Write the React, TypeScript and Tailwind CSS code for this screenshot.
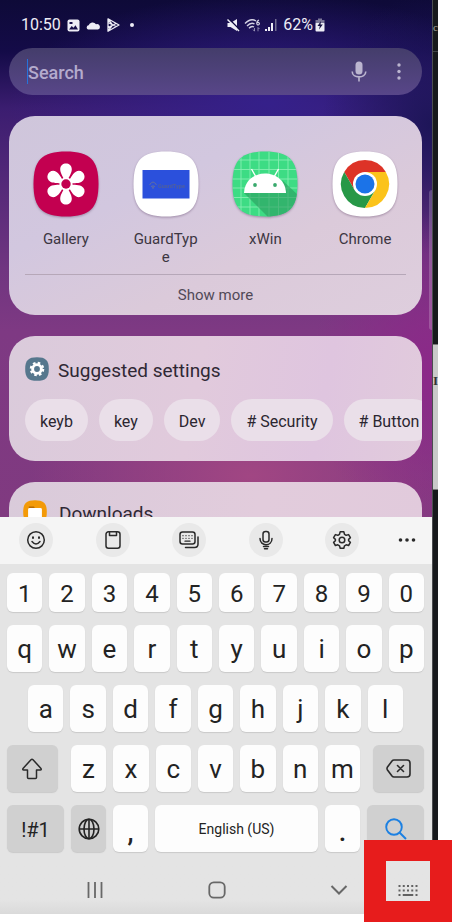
import type { ReactNode } from "react";

const WALLPAPER =
  "bg-[radial-gradient(ellipse_120px_160px_at_100%_72%,#8c2889_0%,#8c288900_100%),radial-gradient(ellipse_220px_110px_at_58%_92%,#a14683_0%,#a1468300_100%),radial-gradient(ellipse_110px_130px_at_100%_24%,#1d1558_0%,#1d155800_100%),radial-gradient(ellipse_260px_110px_at_62%_20%,#35208a_0%,#35208a00_100%),linear-gradient(180deg,#0e0a38_0%,#140b48_10%,#3b1d70_21%,#4e2677_32%,#703580_52%,#7e3983_64%,#803a80_100%)]";

function StatusBar() {
  return (
    <header className="flex h-6 items-center justify-between pl-3 text-[16px] leading-6 text-[#eeedf6]">
      <div className="flex items-center gap-[6px]">
        <span>10:50</span>
        <svg width="13" height="13" viewBox="0 0 13 13" aria-hidden="true">
          <rect x="0.5" y="0.5" width="12" height="12" rx="2" fill="#eeedf6" />
          <path d="M2 10.500 L4.700 7 L6.500 8.800 L8.500 6.200 L11 10.500 Z" fill="#160d4a" />
          <rect x="2.500" y="3" width="3" height="2" fill="#160d4a" />
        </svg>
        <svg width="14" height="9" viewBox="0 0 14 9" aria-hidden="true">
          <path d="M2 8.500 A2.200 2.200 0 0 1 2.600 4.300 A4.200 4.200 0 0 1 10 3.200 A2.800 2.800 0 0 1 12 8.500 Z" fill="#eeedf6" />
        </svg>
        <svg width="14" height="14" viewBox="0 0 14 14" fill="none" stroke="#eeedf6" strokeWidth="1.300" strokeLinejoin="round" aria-hidden="true">
          <path d="M2 0.800 L13 7 L2 13.200 Z M2 1 L6.500 7 L2 13 M2 9.500 L10 5.500 M2 4.500 L10 8.500" />
        </svg>
        <span className="ml-1 size-1 rounded-full bg-[#eeedf6]" />
      </div>
      <div className="mr-[97px] flex items-center gap-1">
        <svg width="13" height="14" viewBox="0 0 13 14" aria-hidden="true">
          <path d="M0.500 5 H3.500 L10 1 V13 L3.500 9 H0.500 Z" fill="#eeedf6" />
          <path d="M1.500 0.500 L13 12" stroke="#100b40" strokeWidth="1.500" />
          <path d="M0.500 1.500 L12 13" stroke="#eeedf6" strokeWidth="1.500" />
        </svg>
        <svg width="17" height="13" viewBox="0 0 17 13" fill="none" stroke="#d4d2e4" strokeWidth="1.400" aria-hidden="true">
          <path d="M1 4.500 Q7 -1.500 12 2 M3 7 Q7 2.800 10.500 5 M5 9.300 Q7.500 6.500 10 8" />
          <path d="M15 1 Q12.500 2 12.800 4.800 A1.300 1.300 0 1 0 13.500 3.500" strokeWidth="1.200" />
          <path d="M10.500 9 V12 M9 10.500 L10.500 12.300 M14 12.300 V8.500 L15.500 10" strokeWidth="1" opacity="0.600" />
        </svg>
        <svg width="12" height="12" viewBox="0 0 12 12" aria-hidden="true">
          <path d="M0 10h2v2H0zM3 8h2v4H3zM6 4h2v8H6z" fill="#eeedf6" />
          <path d="M10 0h1.500v12H10z" fill="#716d91" />
        </svg>
        <span className="ml-[2px] flex items-center gap-[2px]">
          62%
          <svg width="10" height="14" viewBox="0 0 10 14" aria-hidden="true">
            <path d="M3 0.500 H7 V2 H9.500 V6 H0.500 V2 H3 Z" fill="#7c7898" />
            <rect x="0.500" y="5" width="9" height="8.500" rx="1" fill="#eeedf6" />
            <path d="M6 3 L2.500 8 H4.800 L4 11.500 L7.800 6.500 H5.500 Z" fill="#151040" />
          </svg>
        </span>
      </div>
    </header>
  );
}

function SearchBar() {
  return (
    <form className="mt-[11px] flex h-[47px] items-center rounded-full bg-linear-to-b from-[#443d6b] to-[#584689] pl-[18px]">
      <span className="h-[25px] w-px bg-[#2673dc]" />
      <input
        type="text"
        aria-label="Search"
        placeholder="Search"
        className="min-w-0 flex-1 bg-transparent pt-px text-[18px] font-medium text-white outline-none placeholder:text-[#b4abcd]"
      />
      <button type="button" aria-label="Voice search" className="flex w-10 justify-center">
        <svg width="16" height="21" viewBox="0 0 16 21" fill="none">
          <rect x="4.500" y="0.500" width="7" height="13" rx="3.500" fill="#bbb5cf" />
          <path d="M1.200 10.500 C1.200 17.700 14.800 17.700 14.800 10.500 M8 16 V20.500" stroke="#bbb5cf" strokeWidth="1.600" />
        </svg>
      </button>
      <button type="button" aria-label="More options" className="mr-[3px] flex w-10 justify-center">
        <svg width="4" height="17" viewBox="0 0 4 17" fill="#bbb5cf">
          <circle cx="2" cy="2" r="1.700" />
          <circle cx="2" cy="8.500" r="1.700" />
          <circle cx="2" cy="15" r="1.700" />
        </svg>
      </button>
    </form>
  );
}

const SQUIRCLE = "M33 0.500 C57 0.500 65.500 9 65.500 33 C65.500 57 57 65.500 33 65.500 C9 65.500 0.500 57 0.500 33 C0.500 9 9 0.500 33 0.500 Z";

function AppIcon({ name, fill, children }: { name: string; fill: string; children: ReactNode }) {
  const clip = `clip-${name}`;
  return (
    <svg width="66" height="66" viewBox="0 0 66 66" className="drop-shadow-[0_1px_1px_rgba(60,30,70,0.35)]" aria-hidden="true">
      <clipPath id={clip}>
        <path d={SQUIRCLE} />
      </clipPath>
      <g clipPath={`url(#${clip})`}>
        <rect width="66" height="66" fill={fill} />
        {children}
      </g>
    </svg>
  );
}

const apps: { name: string; fill: string; art: ReactNode }[] = [
  {
    name: "Gallery",
    fill: "#c30050",
    art: (
      <g fill="#fff">
        {[0, 60, 120, 180, 240, 300].map((a) => (
          <path key={a} transform={`rotate(${a} 33 33)`} d="M33 33 C31 26.500 27.200 23 27.200 18.300 C27.200 10.600 38.800 10.600 38.800 18.300 C38.800 23 35 26.500 33 33 Z" />
        ))}
        <circle cx="33" cy="33" r="6.600" />
        <circle cx="33" cy="33" r="4.700" fill="#c30050" />
      </g>
    ),
  },
  {
    name: "GuardType",
    fill: "#fff",
    art: (
      <g>
        <rect x="9.500" y="19" width="47" height="28.500" fill="#2b50dc" />
        <path d="M16.500 34 q3.500 -6 7 0 M18 35 q2 3 4 0 M20 34 v4" stroke="#5f6da3" fill="none" />
        <text x="25" y="37" fontSize="5.500" fontWeight="700" fill="#4f5f9d" fontFamily="Roboto, sans-serif">
          GuardType
        </text>
      </g>
    ),
  },
  {
    name: "xWin",
    fill: "#3ddc84",
    art: (
      <g>
        <path d="M9 0V66M18 0V66M27 0V66M37 0V66M46.500 0V66M56 0V66M0 9H66M0 18.500H66M0 28H66M0 37H66M0 46.500H66M0 56H66" stroke="#86edb2" strokeWidth="0.900" />
        <path d="M12 42 L36 66 H66 V44 L50 29 L54 42 Z" fill="#2b9c60" opacity="0.620" />
        <path d="M12 42 C13 16 53 16 54 42 Z" fill="#fff" />
        <path d="M19.500 18 L24 26 M46.500 18 L42 26" stroke="#fff" strokeWidth="1.400" />
        <circle cx="23" cy="34" r="1.900" fill="#3aa96d" />
        <circle cx="43" cy="34" r="1.900" fill="#3aa96d" />
      </g>
    ),
  },
  {
    name: "Chrome",
    fill: "#fff",
    art: (
      <g>
        <path d="M33 33 L53.800 21 A24 24 0 0 0 12.200 21 L22.600 39 Z" fill="#dd3327" />
        <path d="M33 33 L22.600 39 L12.200 21 A24 24 0 0 0 33 57 L43.400 39 Z" fill="#279847" />
        <path d="M33 21 H53.800 A24 24 0 0 1 33 57 L43.400 39 Z" fill="#fbc31b" />
        <circle cx="33" cy="33" r="12" fill="#fff" />
        <circle cx="33" cy="33" r="9.500" fill="#1b73e8" />
      </g>
    ),
  },
];

function AppsCard() {
  return (
    <section className="mt-[21px] rounded-[26px] bg-[linear-gradient(155deg,#cfc6db_0%,#d2c7df_35%,#dbcada_65%,#decedd_100%)] pt-[35px]">
      <div className="grid h-[123px] grid-cols-4 px-[7px]">
        {apps.map((app) => (
          <button key={app.name} type="button" className="flex flex-col items-center gap-[13px]">
            <AppIcon name={app.name} fill={app.fill}>
              {app.art}
            </AppIcon>
            <span className="w-16 text-[15px] leading-[18px] break-all text-[#3c3642]">{app.name}</span>
          </button>
        ))}
      </div>
      <div className="mx-4 border-t border-[#b6a7b8]">
        <button type="button" className="block h-10 w-full text-[15px] text-[#514957]">
          Show more
        </button>
      </div>
    </section>
  );
}

const suggestions = ["keyb", "key", "Dev", "# Security", "# Button"];

function SettingsCard() {
  return (
    <section className="mt-[21px] overflow-hidden rounded-[26px] bg-[linear-gradient(100deg,#dacbdb_0%,#e1cadc_45%,#dfc5df_75%,#e1cbdc_100%)] pt-[21px] pb-5">
      <h2 className="flex h-6 items-center gap-[9px] pl-4 text-[19px] text-[#2f2834]">
        <svg width="24" height="24" viewBox="0 0 66 66" aria-hidden="true">
          <path d={SQUIRCLE} fill="#56778d" />
          <circle cx="33" cy="33" r="12" fill="none" stroke="#fff" strokeWidth="8" />
          <circle cx="33" cy="33" r="17" fill="none" stroke="#fff" strokeWidth="6" strokeDasharray="7 6.350" />
        </svg>
        <span className="pt-1">Suggested settings</span>
      </h2>
      <div className="mt-[18px] flex gap-[11px] pl-4">
        {suggestions.map((label) => (
          <button key={label} type="button" className="h-[42px] shrink-0 rounded-full bg-[#eadfe9] px-[15px] pt-[3px] text-[16px] whitespace-nowrap text-[#2b2630]">
            {label}
          </button>
        ))}
      </div>
    </section>
  );
}

function DownloadsCard() {
  return (
    <section className="mt-[21px] rounded-t-[26px] bg-[linear-gradient(100deg,#d9cbda_0%,#e2ccdc_60%,#e1cadc_100%)] pt-[18px] pb-10">
      <h2 className="flex h-6 items-center gap-3 pl-[14px] text-[19px] text-[#2f2834]">
        <svg width="24" height="24" viewBox="0 0 66 66" aria-hidden="true">
          <path d={SQUIRCLE} fill="#f39a08" />
          <path d="M16 18 H30 L34 24 H16 Z" fill="#b86a00" />
          <rect x="14" y="22" width="38" height="30" rx="4" fill="#fff" />
        </svg>
        <span className="pt-1">Downloads</span>
      </h2>
    </section>
  );
}

function ToolButton({ label, children }: { label: string; children: ReactNode }) {
  return (
    <button type="button" aria-label={label} className="flex size-[34px] items-center justify-center rounded-full bg-[#e9e9e9]">
      <svg width="20" height="20" viewBox="0 0 20 20" fill="none" stroke="#2a2a2a" strokeWidth="1.500" strokeLinecap="round" strokeLinejoin="round">
        {children}
      </svg>
    </button>
  );
}

function Toolbar() {
  return (
    <div className="flex h-[47px] items-center justify-between bg-[#f5f5f5] pr-5 pb-px pl-[19px]">
      <ToolButton label="Emoji">
        <circle cx="10" cy="10" r="8.300" />
        <path d="M6 11.500 Q10 16.500 14 11.500" />
        <path d="M7 7.200 V8 M13 7.200 V8" strokeWidth="2" />
      </ToolButton>
      <ToolButton label="Clipboard">
        <rect x="3" y="1.800" width="14" height="16.400" rx="2.500" />
        <path d="M6.500 2 V5.500 H13.500 V2" />
      </ToolButton>
      <ToolButton label="Keyboard modes">
        <rect x="1" y="2" width="15" height="12" rx="2.500" />
        <path d="M4 5.700h.01M7 5.700h.01M10 5.700h.01M13 5.700h.01M4 8.300h.01M7 8.300h.01M10 8.300h.01M13 8.300h.01M6 11.200H11" strokeWidth="1.300" />
        <path d="M19 7 V14 Q19 17.500 15.500 17.500 H6.500" />
      </ToolButton>
      <ToolButton label="Voice input">
        <rect x="7" y="1.500" width="6" height="10.500" rx="2.500" />
        <path d="M4 8.500 C4 16.800 16 16.800 16 8.500 M7.500 16.500 H12.500 M8.500 18.700 H11.500" />
      </ToolButton>
      <ToolButton label="Keyboard settings">
        <path d="M8.200 1.800 H11.800 L12.500 4.300 L14.200 5.300 L16.600 4.600 L18.400 7.700 L16.600 9.400 V10.800 L18.400 12.400 L16.600 15.500 L14.200 14.800 L12.500 15.800 L11.800 18.200 H8.200 L7.500 15.800 L5.800 14.800 L3.400 15.500 L1.600 12.400 L3.400 10.800 V9.400 L1.600 7.700 L3.400 4.600 L5.800 5.300 L7.500 4.300 Z" />
        <circle cx="10" cy="10" r="2.800" />
      </ToolButton>
      <button type="button" aria-label="More" className="-mx-3 flex size-[34px] items-center justify-center">
        <svg width="18" height="4" viewBox="0 0 18 4" fill="#2a2a2a">
          <circle cx="2.500" cy="2" r="1.800" />
          <circle cx="9" cy="2" r="1.800" />
          <circle cx="15.500" cy="2" r="1.800" />
        </svg>
      </button>
    </div>
  );
}

const KEY = "flex min-w-0 items-center justify-center rounded-md shadow-[0_1px_1px_#c9c9c9]";
const LIGHT = "bg-[#fdfdfd] text-[#232323]";
const DARK = "bg-[#d0d0d0] text-[#232323]";

function LetterKeys({ letters }: { letters: string }) {
  return letters.split("").map((l) => (
    <button key={l} type="button" className={`${KEY} ${LIGHT} h-[47px] flex-1 pt-[2px] text-[26px]`}>
      {l}
    </button>
  ));
}

function Keys() {
  return (
    <div className="flex flex-col gap-[13px] pt-[9px] pr-2 pl-[7px]">
      <div className="flex gap-[7px]">
        {"1234567890".split("").map((n) => (
          <button key={n} type="button" className={`${KEY} ${LIGHT} h-[39px] flex-1 pt-[2px] text-[24px]`}>
            {n}
          </button>
        ))}
      </div>
      <div className="flex gap-[7px]">
        <LetterKeys letters="qwertyuiop" />
      </div>
      <div className="flex gap-[7px] px-[21px]">
        <LetterKeys letters="asdfghjkl" />
      </div>
      <div className="flex gap-[13px]">
        <button type="button" aria-label="Shift" className={`${KEY} ${DARK} flex-[51]`}>
          <svg width="22" height="22" viewBox="0 0 22 22" fill="none" stroke="#2a2a2a" strokeWidth="1.500" strokeLinejoin="round">
            <path d="M10 1.700 Q11 0.800 12 1.700 L20 10.500 Q20.700 12 19.300 12 H15.500 V19.500 Q15.500 20.500 14.500 20.500 H7.500 Q6.500 20.500 6.500 19.500 V12 H2.700 Q1.300 12 2 10.500 Z" />
          </svg>
        </button>
        <div className="flex flex-[290] gap-[7px]">
          <LetterKeys letters="zxcvbnm" />
        </div>
        <button type="button" aria-label="Backspace" className={`${KEY} ${DARK} flex-[51]`}>
          <svg width="25" height="19" viewBox="0 0 25 19" fill="none" stroke="#2a2a2a" strokeWidth="1.600" strokeLinejoin="round" strokeLinecap="round">
            <path d="M8 1 H21 Q24 1 24 4 V15 Q24 18 21 18 H8 Q6.800 18 6 17 L1.300 10.700 Q0.700 9.500 1.300 8.300 L6 2 Q6.800 1 8 1 Z M11.500 6.500 L17.500 12.500 M17.500 6.500 L11.500 12.500" />
          </svg>
        </button>
      </div>
      <div className="flex h-[47px] gap-[7px]">
        <button type="button" className={`${KEY} ${DARK} flex-[57] pt-[2px] text-[20px]`}>
          !#1
        </button>
        <button type="button" aria-label="Language" className={`${KEY} ${DARK} flex-[35]`}>
          <svg width="22" height="22" viewBox="0 0 22 22" fill="none" stroke="#232323" strokeWidth="1.600">
            <circle cx="11" cy="11" r="9.800" />
            <ellipse cx="11" cy="11" rx="5" ry="9.800" />
            <path d="M1 11 H21 M11 1 V21" />
          </svg>
        </button>
        <button type="button" className={`${KEY} ${LIGHT} flex-[35] pt-2 text-[27px] font-medium`}>
          ,
        </button>
        <button type="button" className={`${KEY} ${LIGHT} flex-[163] pt-[2px] text-[14px]`}>
          English (US)
        </button>
        <button type="button" className={`${KEY} ${LIGHT} flex-[35] pt-2 text-[27px] font-medium`}>
          .
        </button>
        <button type="button" aria-label="Search" className={`${KEY} ${DARK} flex-[57]`}>
          <svg width="22" height="22" viewBox="0 0 22 22" fill="none" stroke="#1c80e2" strokeWidth="1.900">
            <circle cx="9" cy="9" r="7.800" />
            <path d="M14.500 14.500 L21 21" />
          </svg>
        </button>
      </div>
    </div>
  );
}

function NavBar() {
  const item = "flex h-12 items-center justify-center";
  return (
    <nav className="mt-[14px] grid grid-cols-[73fr_44px_78fr_44px_78fr_44px_25fr_44px_2fr] bg-linear-to-b from-[#e4e4e4] from-70% to-[#dadada]">
      <button type="button" aria-label="Recent apps" className={`${item} col-start-2`}>
        <svg width="16" height="16" viewBox="0 0 16 16" stroke="#686868" strokeWidth="1.800">
          <path d="M1.500 0V16M8 0V16M14.500 0V16" />
        </svg>
      </button>
      <button type="button" aria-label="Home" className={`${item} col-start-4`}>
        <svg width="18" height="18" viewBox="0 0 18 18" fill="none" stroke="#686868" strokeWidth="1.800">
          <rect x="1.300" y="1.300" width="15.400" height="15.400" rx="4.500" />
        </svg>
      </button>
      <button type="button" aria-label="Hide keyboard" className={`${item} col-start-6`}>
        <svg width="18" height="10" viewBox="0 0 18 10" fill="none" stroke="#686868" strokeWidth="2">
          <path d="M1.500 1 L9 8.500 L16.500 1" />
        </svg>
      </button>
      <button type="button" aria-label="Switch keyboard" className={`${item} col-start-8`}>
        <svg width="20" height="11" viewBox="0 0 20 11" fill="#626262">
          <path d="M0.500 0h2v2h-2zM4.750 0h2v2h-2zM9 0h2v2h-2zM13.250 0h2v2h-2zM17.500 0h2v2h-2zM0.500 4.500h2v2h-2zM4.750 4.500h2v2h-2zM9 4.500h2v2h-2zM13.250 4.500h2v2h-2zM17.500 4.500h2v2h-2zM0.500 9h2v2h-2zM4.750 9h10.500v2h-10.500zM17.500 9h2v2h-2z" />
        </svg>
      </button>
    </nav>
  );
}

function WindowEdge() {
  return (
    <div className="flex w-[6px] shrink-0 flex-col overflow-hidden border-l border-[#4b4d50] bg-[#17191c] font-['Liberation_Serif',serif] leading-5">
      <div className="h-[52px] border-b border-[#424447] pt-[17px] text-[11px] text-[#a8a79c]">c</div>
      <div className="mt-[292px] h-[146px] shrink-0 border-y border-[#777777] bg-[#c9c9c9] pt-[26px] text-[13px] font-bold text-[#333333]">I</div>
    </div>
  );
}

export default function App() {
  return (
    <div className="relative flex h-screen overflow-hidden bg-white pr-[14px] pb-2 font-[Roboto,sans-serif]">
      <div className="flex min-w-0 flex-1 flex-col">
        <main className={`relative min-h-0 flex-1 overflow-hidden pt-[13px] pr-[10px] pl-[9px] ${WALLPAPER}`}>
          <StatusBar />
          <SearchBar />
          <AppsCard />
          <SettingsCard />
          <DownloadsCard />
          <div className="absolute top-[190px] right-0 h-[140px] w-[3px] rounded-l bg-white/20" />
        </main>
        <footer className="bg-[#e4e4e4]">
          <Toolbar />
          <Keys />
          <NavBar />
        </footer>
      </div>
      <WindowEdge />
      <div className="pointer-events-none absolute right-0 bottom-0 h-[82px] w-[88px] border-x-[22px] border-y-[21px] border-[#e71c1c]" />
    </div>
  );
}
